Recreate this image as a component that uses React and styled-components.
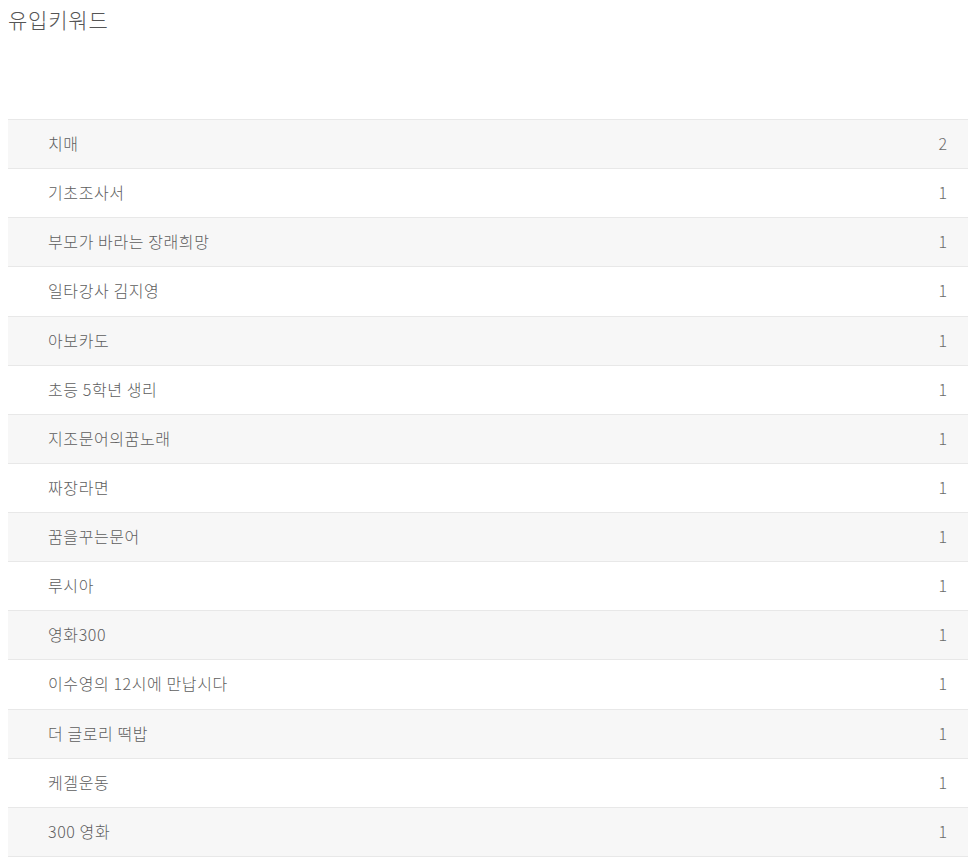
import React from 'react'
import styled, { createGlobalStyle } from 'styled-components'

const GlobalStyle = createGlobalStyle`
    body {
        margin: 8px;
        background: #ffffff;
        font-family: "Noto Sans CJK KR", "Noto Sans", sans-serif;
    }
`

const Title = styled.h2`
    margin: 0;
    font-size: 21px;
    font-weight: 300;
    line-height: 22px;
    letter-spacing: 0.8px;
    color: #555555;
`

const List = styled.div`
    width: 962px;
    margin-top: 89px;
    border-top: 1px solid #e8e8e8;
`

const Row = styled.div`
    display: flex;
    justify-content: space-between;
    align-items: center;
    height: 48.13px;
    padding: 0 23px 0 40px;
    border-bottom: 1px solid #e8e8e8;
    background: ${props => (props.striped ? '#f7f7f7' : '#ffffff')};
    font-size: 16px;
    font-weight: 300;
    color: #5e5e5e;
`

const Keyword = styled.span`
    letter-spacing: 0.6px;
    transform: translateY(-1px);
`

const Count = styled.span`
    color: #6a6a6a;
    transform: translateY(-1px);
`

const keywords = [
    ['치매', 2],
    ['기초조사서', 1],
    ['부모가 바라는 장래희망', 1],
    ['일타강사 김지영', 1],
    ['아보카도', 1],
    ['초등 5학년 생리', 1],
    ['지조문어의꿈노래', 1],
    ['짜장라면', 1],
    ['꿈을꾸는문어', 1],
    ['루시아', 1],
    ['영화300', 1],
    ['이수영의 12시에 만납시다', 1],
    ['더 글로리 떡밥', 1],
    ['케겔운동', 1],
    ['300 영화', 1],
]

export default function App () {
    return (
        <>
            <GlobalStyle />
            <Title>유입키워드</Title>
            <List>
                {keywords.map(([word, count], i) => (
                    <Row key={word} striped={i % 2 === 0}>
                        <Keyword>{word}</Keyword>
                        <Count>{count}</Count>
                    </Row>
                ))}
            </List>
        </>
    )
}
